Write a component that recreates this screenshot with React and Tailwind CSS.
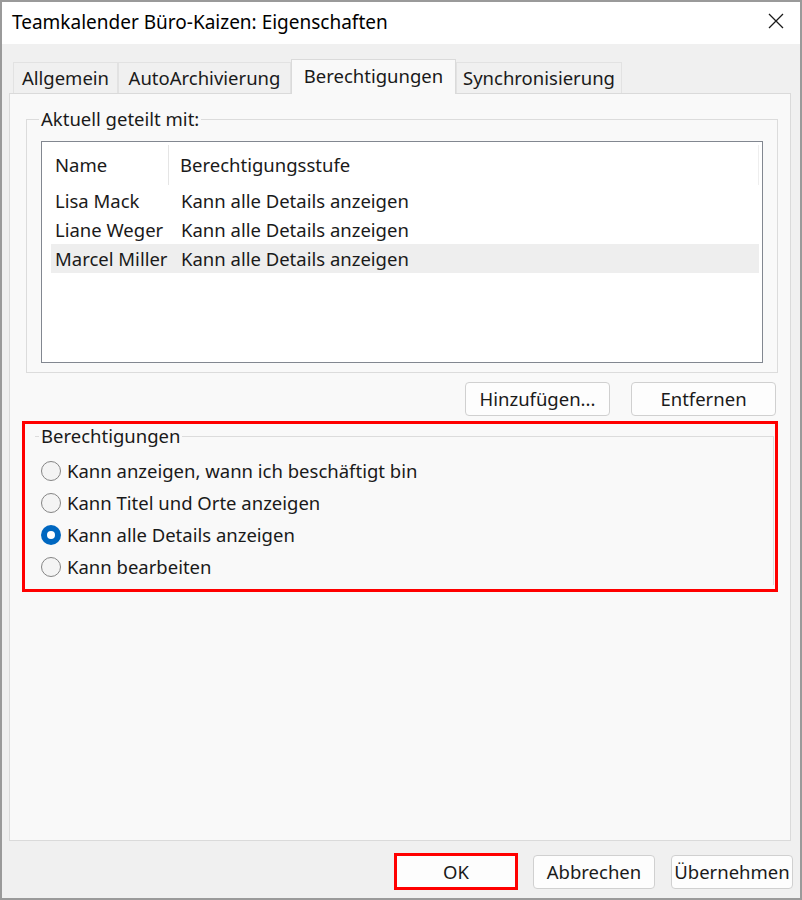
// App.jsx
import React, { useState } from 'react';

const font = { fontFamily: '"Noto Sans", "Open Sans", Arial, sans-serif' };

const members = [
  { name: 'Lisa Mack', level: 'Kann alle Details anzeigen' },
  { name: 'Liane Weger', level: 'Kann alle Details anzeigen' },
  { name: 'Marcel Miller', level: 'Kann alle Details anzeigen' },
];

const options = [
  'Kann anzeigen, wann ich beschäftigt bin',
  'Kann Titel und Orte anzeigen',
  'Kann alle Details anzeigen',
  'Kann bearbeiten',
];

const Radio = ({ checked }) =>
  checked ? (
    <span className="w-[20px] h-[20px] rounded-full bg-[#0067c0] flex items-center justify-center shrink-0">
      <span className="w-[8px] h-[8px] rounded-full bg-white" />
    </span>
  ) : (
    <span className="w-[20px] h-[20px] rounded-full border-[1.5px] border-[#858585] bg-[#f4f4f4] shrink-0" />
  );

const Button = ({ children, className = '' }) => (
  <button
    className={`h-[34px] rounded-[4px] border border-[#d0d0d0] bg-[#fdfdfd] text-[18.5px] text-[#1a1a1a] flex items-center justify-center ${className}`}
  >
    {children}
  </button>
);

const App = () => {
  const [selected, setSelected] = useState(2);

  return (
    <div
      style={font}
      className="w-[802px] h-[900px] border-2 border-[#9a9a9a] bg-[#f0f0f0] flex flex-col text-[#1a1a1a]"
    >
      {/* title bar */}
      <div className="h-[42px] bg-white flex items-center justify-between pl-[10px] pr-[16px]">
        <span className="text-[19px] text-black -mt-[2px]">Teamkalender Büro-Kaizen: Eigenschaften</span>
        <svg width="16" height="16" viewBox="0 0 16 16" className="-mt-[4px]">
          <path d="M1 1 L15 15 M15 1 L1 15" stroke="#1a1a1a" strokeWidth="1.3" fill="none" />
        </svg>
      </div>

      {/* tabs */}
      <div className="flex items-end h-[49px] pl-[11px] text-[18.5px]">
        <div className="w-[105px] h-[31px] bg-[#f0f0f0] border border-b-0 border-[#e2e2e2] flex items-center justify-center">
          Allgemein
        </div>
        <div className="w-[173px] h-[31px] bg-[#f0f0f0] border border-b-0 border-[#e2e2e2] flex items-center justify-center">
          AutoArchivierung
        </div>
        <div className="w-[165px] h-[35px] bg-[#f9f9f9] border border-b-0 border-[#dadada] flex items-start justify-center pt-[2px] -mb-px relative z-10">
          Berechtigungen
        </div>
        <div className="w-[166px] h-[31px] bg-[#f0f0f0] border border-b-0 border-[#e2e2e2] flex items-center justify-center">
          Synchronisierung
        </div>
      </div>

      {/* tab panel */}
      <div className="ml-[7px] w-[782px] h-[748px] bg-[#f9f9f9] border border-[#dadada] flex flex-col text-[18.5px]">
        <fieldset className="mt-[14px] ml-[16px] mr-[12px] border border-[#dcdcdc] px-[14px] pb-[9px]">
          <legend className="-ml-[2px] px-[2px] leading-[22px]">Aktuell geteilt mit:</legend>
          <div className="mt-[11px] h-[222px] bg-white border border-[#828790] flex flex-col">
            <div className="flex h-[44px] ml-[9px] mr-[3px] items-center pt-[2px]">
              <div className="w-[118px] pl-[4px] h-[40px] flex items-center border-r border-[#e5e5e5]">Name</div>
              <div className="flex-1 pl-[11px] h-[40px] flex items-center border-r border-[#eeeeee]">Berechtigungsstufe</div>
            </div>
            {members.map((m, i) => (
              <div
                key={m.name}
                className={`flex h-[29px] ml-[9px] mr-[3px] items-center ${i === 2 ? 'bg-[#eeeeee]' : ''}`}
              >
                <div className="w-[118px] pl-[4px] whitespace-nowrap">{m.name}</div>
                <div className="flex-1 pl-[12px] whitespace-nowrap">{m.level}</div>
              </div>
            ))}
          </div>
        </fieldset>

        <div className="flex justify-end gap-[21px] mt-[9px] mr-[14px]">
          <Button className="w-[145px]">Hinzufügen...</Button>
          <Button className="w-[145px]">Entfernen</Button>
        </div>

        <div className="mt-[5px] ml-[12px] mr-[12px] h-[171px] border-[3px] border-[#ff0000]">
          <fieldset className="ml-[10px] mr-[1px] border-t border-r border-[#dcdcdc] h-[160px] mt-[1px]">
            <legend className="ml-[4px] px-[2px] leading-[22px]">Berechtigungen</legend>
            <div className="flex flex-col ml-[6px] mt-[8px]">
              {options.map((o, i) => (
                <div
                  key={o}
                  onClick={() => setSelected(i)}
                  className="flex items-center h-[32px] gap-[6px] cursor-default"
                >
                  <Radio checked={selected === i} />
                  <span className="whitespace-nowrap">{o}</span>
                </div>
              ))}
            </div>
          </fieldset>
        </div>
      </div>

      {/* dialog buttons */}
      <div className="flex justify-end items-center mt-[12px] mr-[7px]">
        <div className="w-[124px] h-[37px] border-[3px] border-[#ff0000] bg-[#fdfdfd] flex items-center justify-center text-[18.5px]">
          OK
        </div>
        <Button className="w-[122px] ml-[15px]">Abbrechen</Button>
        <Button className="w-[122px] ml-[16px]">Übernehmen</Button>
      </div>
    </div>
  );
};

export default App;
